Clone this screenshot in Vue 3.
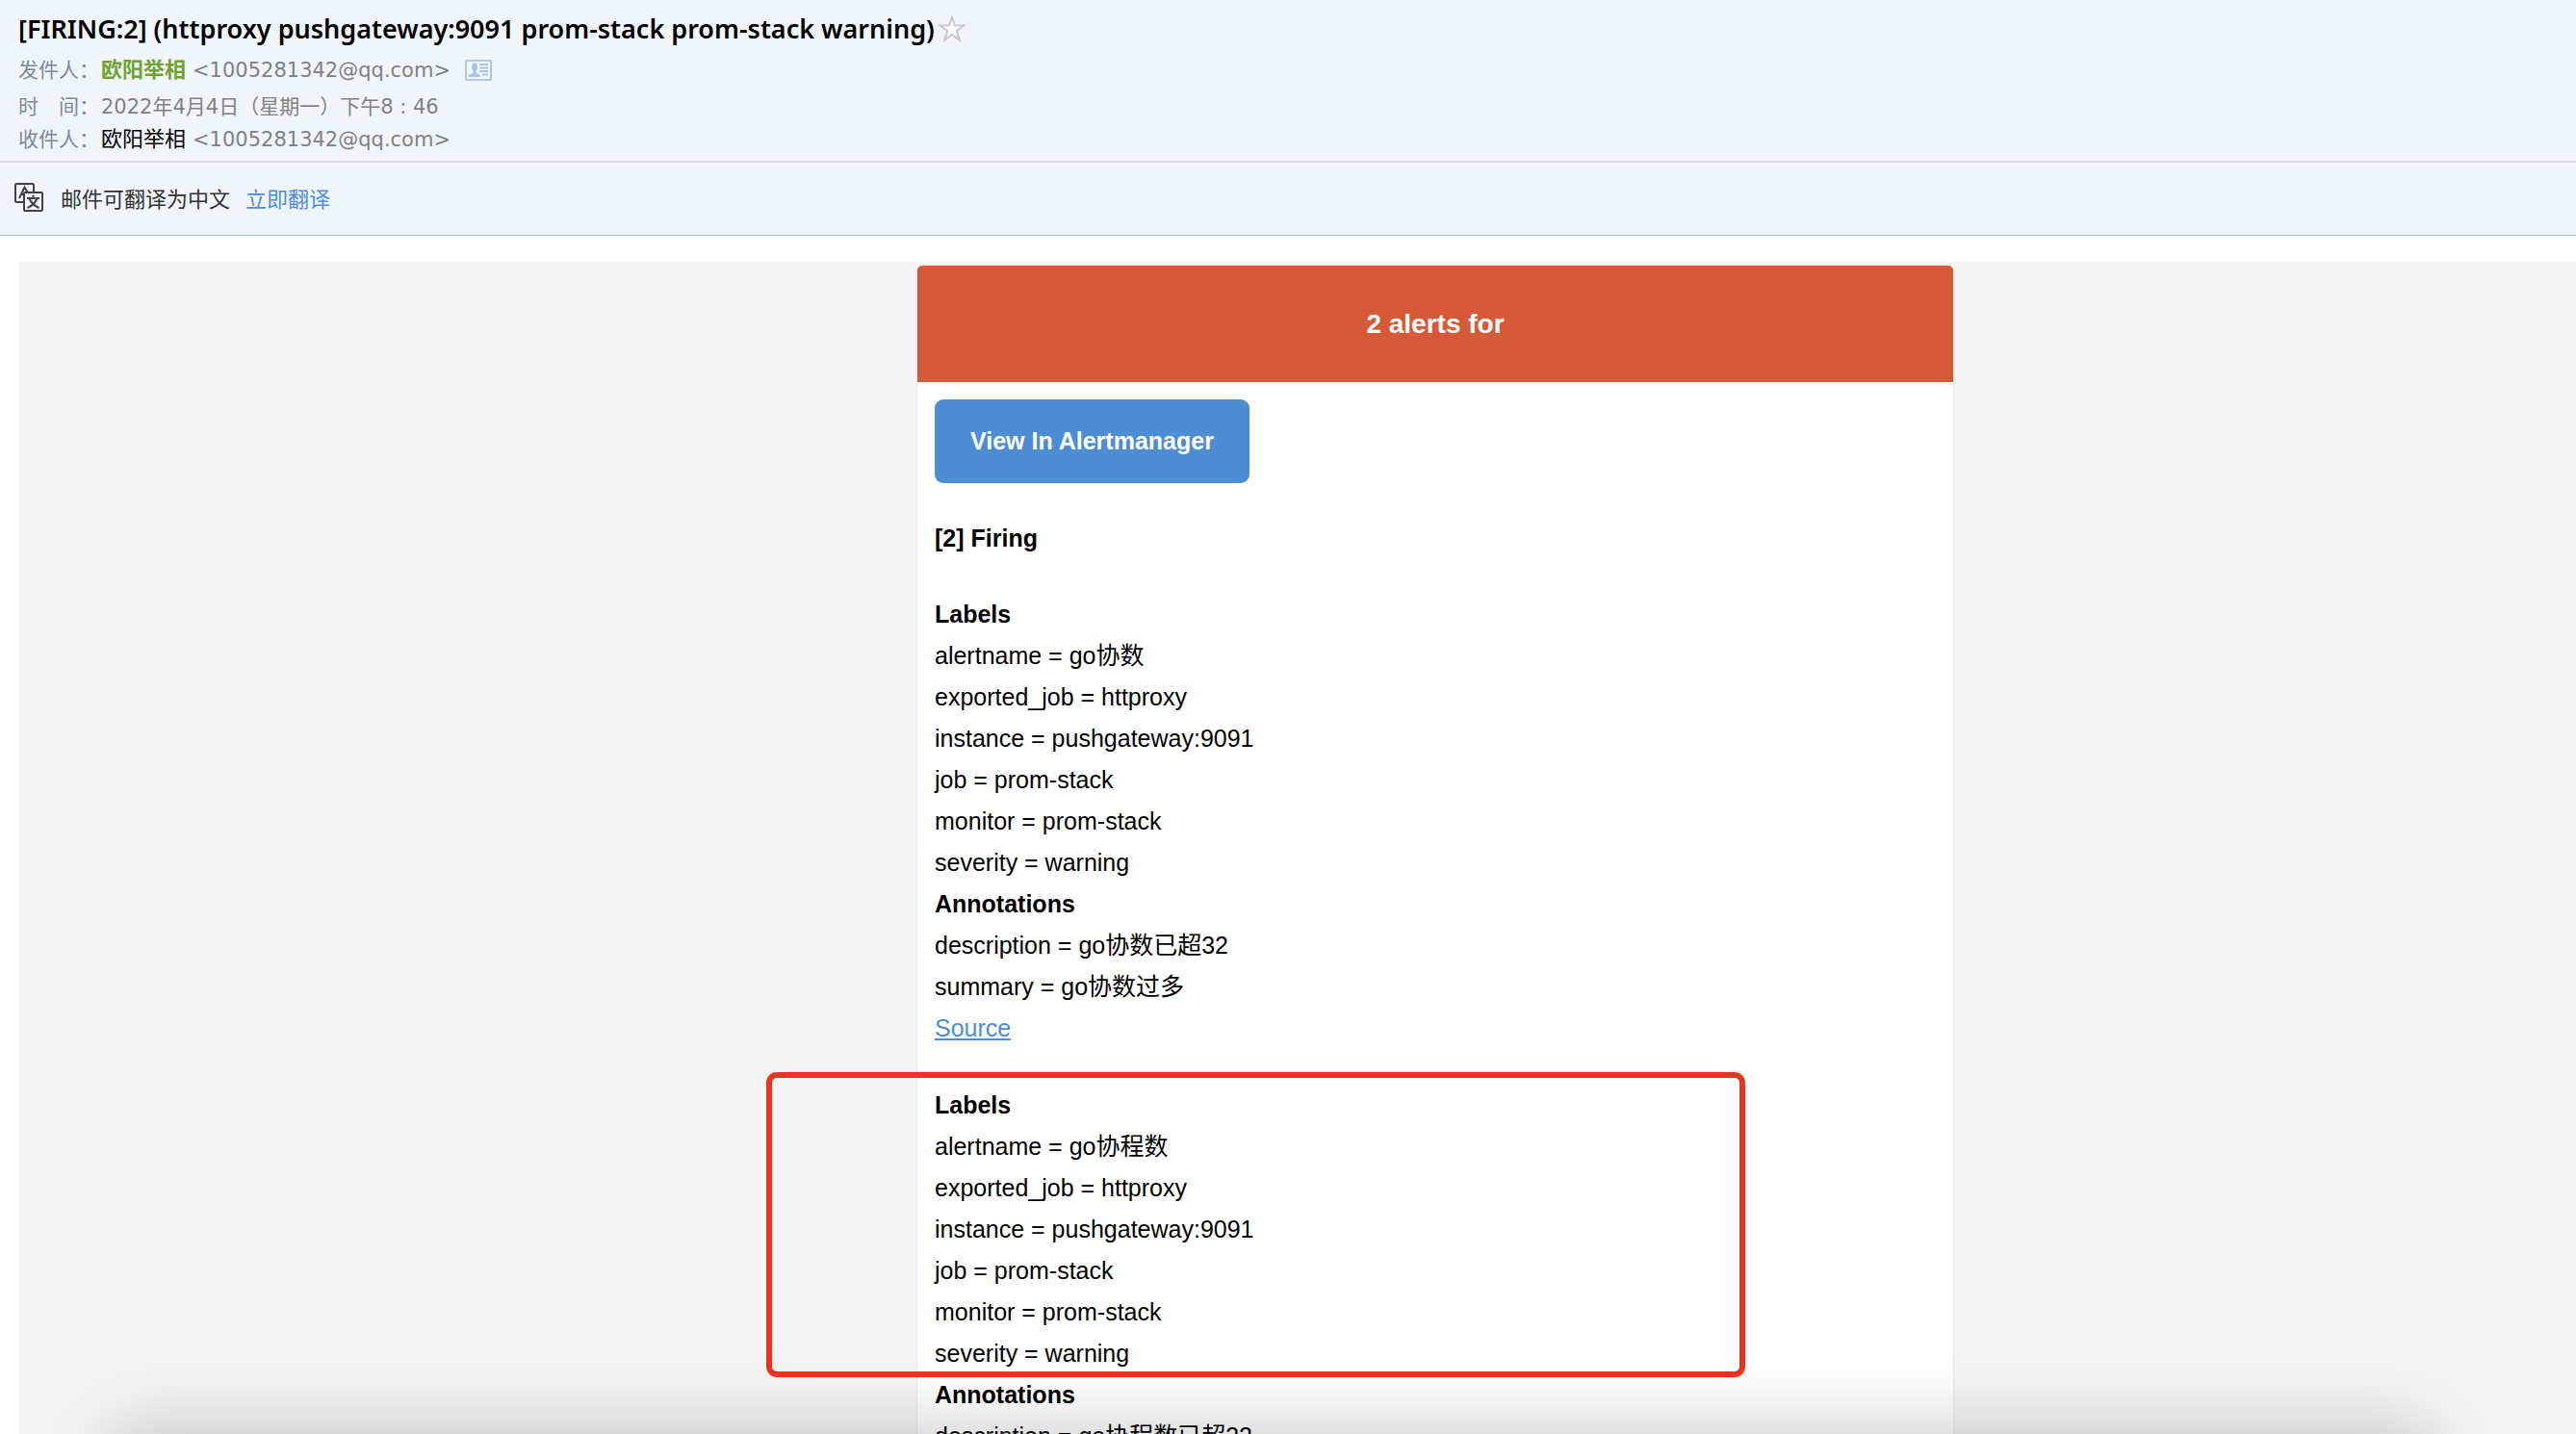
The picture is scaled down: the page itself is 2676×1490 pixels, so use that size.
<script setup>
const alerts = [
  {
    labels: [
      ['alertname', 'go协数'],
      ['exported_job', 'httproxy'],
      ['instance', 'pushgateway:9091'],
      ['job', 'prom-stack'],
      ['monitor', 'prom-stack'],
      ['severity', 'warning'],
    ],
    annotations: [
      ['description', 'go协数已超32'],
      ['summary', 'go协数过多'],
    ],
    marked: false,
  },
  {
    labels: [
      ['alertname', 'go协程数'],
      ['exported_job', 'httproxy'],
      ['instance', 'pushgateway:9091'],
      ['job', 'prom-stack'],
      ['monitor', 'prom-stack'],
      ['severity', 'warning'],
    ],
    annotations: [['description', 'go协程数已超32']],
    marked: true,
  },
]
</script>

<template>
  <div class="page">
    <header class="mail-head">
      <div class="subject">
        <h1>[FIRING:2] (httproxy pushgateway:9091 prom-stack prom-stack warning)</h1>
        <button type="button" class="icon-btn" aria-label="星标">
          <svg width="28" height="28" viewBox="0 0 28 28">
            <path d="M14 2l3 8.600h9.200l-7.400 5.600 2.800 9.200L14 19.900l-7.600 5.500 2.800-9.200-7.400-5.600H11z" fill="#fff" stroke="#c6c8ca" stroke-width="2" />
          </svg>
        </button>
      </div>
      <dl class="meta">
        <div class="row sender">
          <dt>发件人：</dt>
          <dd>
            <b class="name from">欧阳举相</b>
            <span>&lt;1005281342@qq.com&gt;</span>
            <button type="button" class="icon-btn contact" aria-label="联系人">
              <svg width="28" height="22" viewBox="0 0 28 22">
                <rect x="1" y="1" width="26" height="20" rx="1" fill="#eff6fc" stroke="#b3c8de" stroke-width="2" />
                <ellipse cx="10" cy="7.500" rx="3" ry="4" fill="#a9c3e0" />
                <path d="M8.500 10h3v4l4 1.500V18H4v-2.500l4.500-1.500z" fill="#a9c3e0" />
                <path d="M15 5h9M15 8.500h9M15 12h9M18 15.500h6" stroke="#a9c3e0" stroke-width="2" />
              </svg>
            </button>
          </dd>
        </div>
        <div class="row">
          <dt>时　间：</dt>
          <dd><span>2022年4月4日（星期一）下午8 : 46</span></dd>
        </div>
        <div class="row">
          <dt>收件人：</dt>
          <dd>
            <span class="name to">欧阳举相</span>
            <span>&lt;1005281342@qq.com&gt;</span>
          </dd>
        </div>
      </dl>
    </header>

    <div class="translate">
      <svg width="30" height="30" viewBox="0 0 30 30" aria-hidden="true">
        <path d="M10 20H2.500a1.500 1.500 0 0 1-1.500-1.500v-16A1.500 1.500 0 0 1 2.500 1h16A1.500 1.500 0 0 1 20 2.500V9" fill="none" stroke="#3f4346" stroke-width="2" />
        <path d="M5 16L10.500 4.500L13.500 9.500M7.500 12H10" fill="none" stroke="#3f4346" stroke-width="2" />
        <rect x="10" y="10" width="19" height="19" rx="1" fill="none" stroke="#3f4346" stroke-width="2" />
        <path d="M19.500 12.500v3M13 16h13M15.500 16.500q3 6.500 10 9.500M23.500 16.500q-3 6.500-10 9.500" fill="none" stroke="#3f4346" stroke-width="2" />
      </svg>
      <span>邮件可翻译为中文</span>
      <a href="#">立即翻译</a>
    </div>

    <main class="mail-body">
      <article class="card">
        <h2>2 alerts for</h2>
        <div class="content">
          <a href="#" class="view">View In Alertmanager</a>
          <p class="count"><strong>[2] Firing</strong></p>
          <section v-for="(alert, i) in alerts" :key="i" class="alert">
            <div class="group" :class="{ marked: alert.marked }">
              <strong>Labels</strong>
              <p v-for="[name, value] in alert.labels" :key="name">{{ name }} = {{ value }}</p>
            </div>
            <div class="group">
              <strong>Annotations</strong>
              <p v-for="[name, value] in alert.annotations" :key="name">{{ name }} = {{ value }}</p>
            </div>
            <a v-if="!alert.marked" href="#" class="source">Source</a>
          </section>
        </div>
      </article>
    </main>
    <div class="window-shadow"></div>
  </div>
</template>

<style>
body {
  overflow: hidden;
}
</style>

<style scoped>
.page {
  position: relative;
  display: flex;
  flex-direction: column;
  height: 100vh;
  overflow: hidden;
  background: #fff;
  color: #000;
  font-family: "DejaVu Sans", "Noto Sans CJK SC", sans-serif;
  font-size: 21px;
}
h1, h2, p, dl, dd {
  margin: 0;
}
.mail-head {
  flex: none;
  padding: 8px 19px 5px;
  background: #eff5f9;
  border-bottom: 2px solid #d8dce0;
}
.subject {
  display: flex;
  align-items: center;
  gap: 4px;
  height: 44px;
}
h1 {
  font-family: "Noto Sans", sans-serif;
  font-size: 27px;
  font-weight: 600;
  line-height: 44px;
}
.icon-btn {
  display: flex;
  padding: 0;
  border: 0;
  background: none;
}
.contact {
  margin-left: 8px;
}
.row {
  display: flex;
  line-height: 34px;
}
.sender {
  line-height: 42px;
}
dt {
  width: 86px;
  color: #7d8a9e;
  white-space: nowrap;
}
dd {
  display: flex;
  align-items: center;
  gap: 7px;
  color: #828282;
}
.name {
  font-size: 22px;
}
.from {
  color: #70a22f;
}
.to {
  color: #000;
}
.translate {
  flex: none;
  display: flex;
  align-items: center;
  height: 71px;
  padding: 0 15px 4px;
  background: #eff5f9;
  border-bottom: 1px solid #abc0df;
  color: #333;
  font-size: 22px;
}
.translate span {
  margin: 0 16px 0 18px;
}
.translate a {
  color: #4f8ce0;
  text-decoration: none;
}
.mail-body {
  flex: 1;
  display: grid;
  grid-template-columns: 932fr 1078fr 646fr;
  min-height: 0;
  margin: 27px 0 0 20px;
  padding-top: 3px;
  background: #f5f5f5;
  font-family: "Liberation Sans", "Noto Sans CJK SC", sans-serif;
  font-size: 25px;
  line-height: 43px;
}
.card {
  grid-column: 2;
  border: 1px solid #e8e8e8;
  border-radius: 6px 6px 0 0;
  background: #fff;
}
h2 {
  padding: 39px 0;
  border-radius: 5px 5px 0 0;
  background: #d65a38;
  color: #fff;
  font-size: 28px;
  line-height: 43px;
  text-align: center;
}
.content {
  padding: 18px;
}
.view {
  display: inline-block;
  padding: 22px 37px;
  border-radius: 9px;
  background: #4c8dd3;
  color: #fff;
  font-weight: bold;
  text-decoration: none;
  vertical-align: top;
}
.count {
  margin: 36px 0;
}
.alert {
  margin-bottom: 37px;
}
.group {
  position: relative;
}
.group strong {
  display: block;
}
.marked::after {
  content: "";
  position: absolute;
  top: -13px;
  bottom: -3px;
  left: -175px;
  width: 1017px;
  box-sizing: border-box;
  border: 6px solid #ec3323;
  border-radius: 11px;
}
.source {
  color: #4c8dd3;
}
.window-shadow {
  position: absolute;
  top: 100%;
  left: 115px;
  right: 150px;
  height: 200px;
  box-shadow: 0 0 84px rgba(0, 0, 0, 0.24);
}
</style>
